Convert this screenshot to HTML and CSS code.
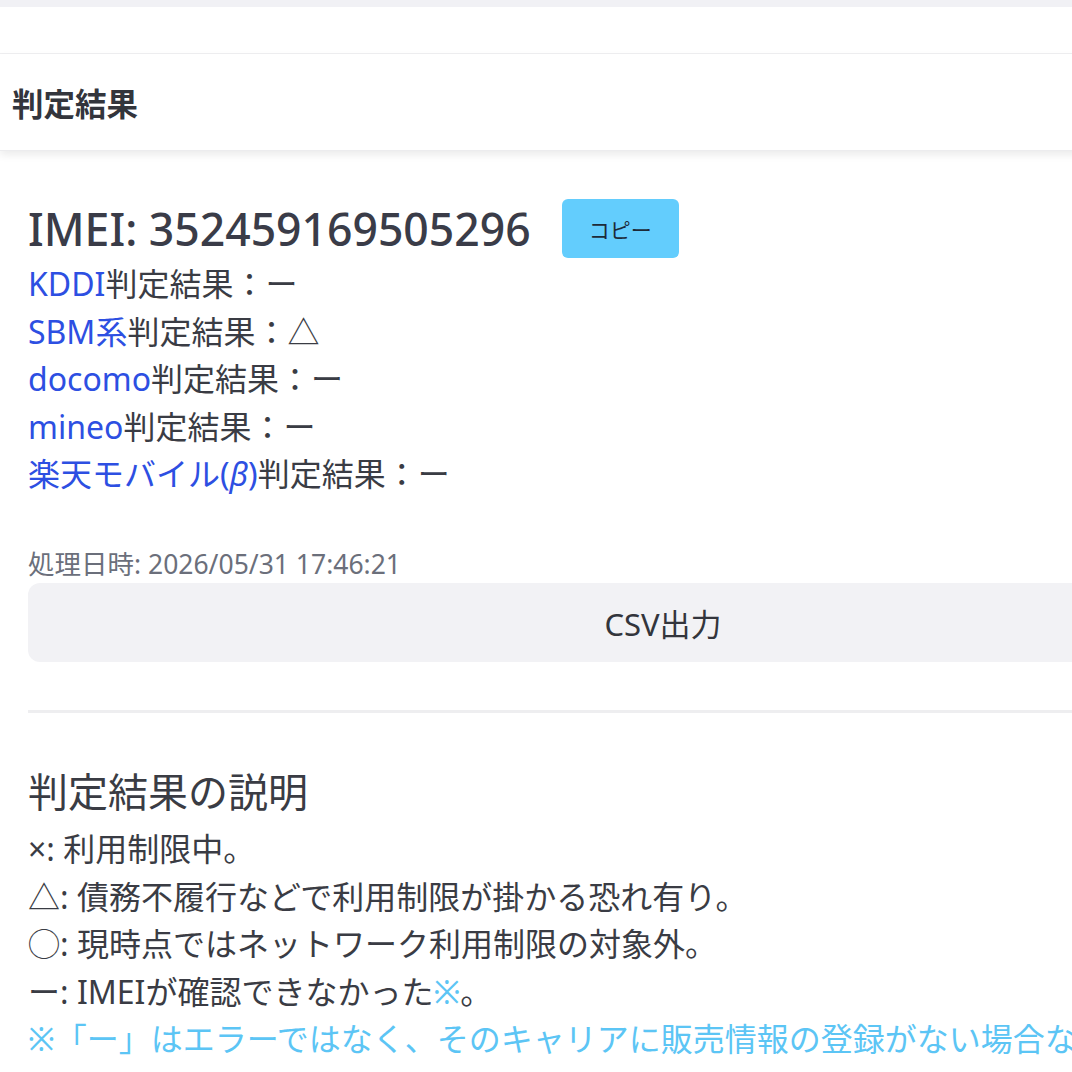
FILE: index.html
```html
<!DOCTYPE html>
<html lang="ja">
<head>
    <meta charset="UTF-8">
    <meta name="viewport" content="width=device-width, initial-scale=1.0">
    <title>判定結果</title>
    <link rel="stylesheet" href="styles.css">
</head>
<body>
    <div class="top-band"></div>
    <div class="top-space"></div>

    <div class="page">
        <div class="result-header">判定結果</div>

        <div class="result-body">
            <div class="imei-row">
                <h2 class="imei">IMEI: 352459169505296</h2>
                <button class="copy-btn">コピー</button>
            </div>
            <div class="line"><a href="#">KDDI</a>判定結果：ー</div>
            <div class="line"><a href="#">SBM系</a>判定結果：△</div>
            <div class="line"><a href="#">docomo</a>判定結果：ー</div>
            <div class="line"><a href="#">mineo</a>判定結果：ー</div>
            <div class="line"><a href="#">楽天モバイル(<i>β</i>)</a>判定結果：ー</div>

            <div class="date">処理日時: 2026/05/31 17:46:21</div>
            <button class="csv-btn">CSV出力</button>

            <hr class="divider">

            <h3 class="explain-title">判定結果の説明</h3>
            <div class="line">×: 利用制限中。</div>
            <div class="line">△: 債務不履行などで利用制限が掛かる恐れ有り。</div>
            <div class="line">◯: 現時点ではネットワーク利用制限の対象外。</div>
            <div class="line">ー: IMEIが確認できなかった<span class="note">※</span>。</div>
            <div class="line note">※「ー」はエラーではなく、そのキャリアに販売情報の登録がない場合などにも表示されます。</div>
        </div>
    </div>
</body>
</html>
```

FILE: styles.css
```css
html, body {
    margin: 0;
    overflow: hidden;
}

body {
    font-family: "Noto Sans", "Noto Sans CJK JP", sans-serif;
    color: #3a3c44;
    background-color: #fff;
}

.top-band {
    height: 7px;
    background-color: #f1f1f5;
}

.top-space {
    height: 46px;
    border-bottom: 1px solid #efeff1;
}

.page {
    width: 1326px;
}

.result-header {
    height: 96px;
    display: flex;
    align-items: center;
    padding-left: 12px;
    font-size: 31.5px;
    font-weight: bold;
    color: #33353c;
    box-shadow: 0px 4px 8px rgba(0, 0, 0, 0.08);
    border-bottom: 1px solid #ececee;
}

.result-body {
    padding: 48px 28px 0 28px;
}

.imei-row {
    display: flex;
    align-items: center;
    gap: 31px;
    height: 59px;
    margin-bottom: 2px;
}

.imei {
    margin: 0;
    font-size: 44.5px;
    font-weight: 500;
    color: #3a3c48;
}

.copy-btn {
    width: 117px;
    height: 59px;
    background-color: #63cdfd;
    border: none;
    border-radius: 6px;
    font-family: "Noto Sans CJK JP", sans-serif;
    font-size: 21px;
    color: #1d2a38;
    cursor: pointer;
}

.line {
    font-size: 32px;
    line-height: 47.6px;
    white-space: nowrap;
}

.line a {
    color: #2d4fe2;
    text-decoration: none;
}

.line a i {
    font-style: italic;
}

.date {
    margin-top: 47px;
    font-size: 26.5px;
    line-height: 38px;
    color: #6b6f7b;
}

.csv-btn {
    display: block;
    width: 100%;
    height: 79px;
    background-color: #f2f2f5;
    border: none;
    border-radius: 12px;
    font-family: "Noto Sans", "Noto Sans CJK JP", sans-serif;
    font-size: 31px;
    color: #33353c;
}

.divider {
    margin: 48px 0 0 0;
    border: none;
    height: 3px;
    background-color: #eeeef0;
}

.explain-title {
    margin: 51px 0 5px 0;
    font-size: 40px;
    font-weight: normal;
    line-height: 56px;
    color: #3a3c44;
}

.note {
    color: #5cc5f5;
}
```
